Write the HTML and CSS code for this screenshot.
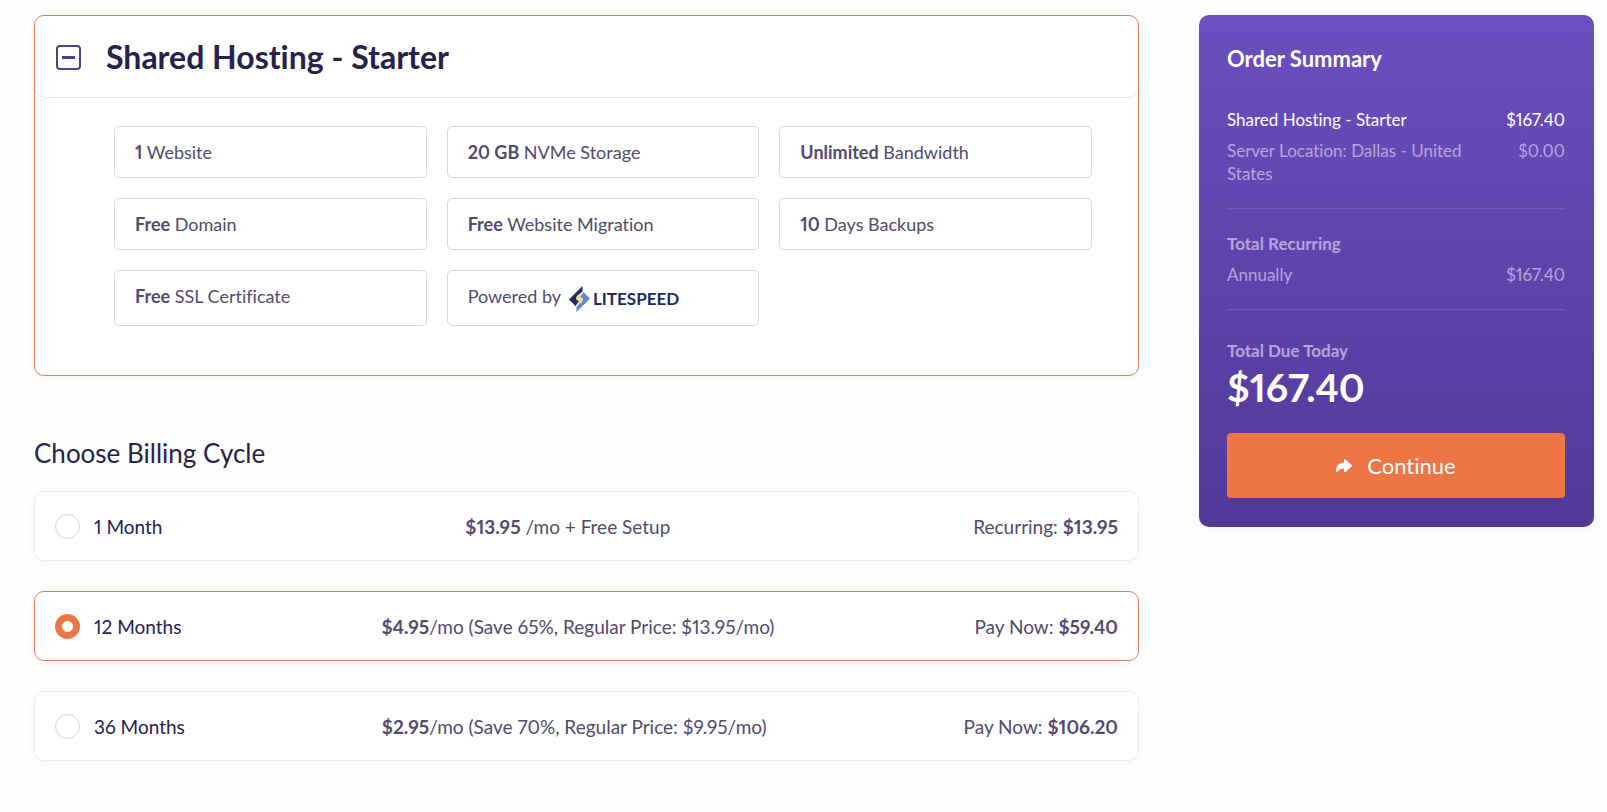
FILE: index.html
```html
<!DOCTYPE html>
<html lang="en">
<head>
    <meta charset="UTF-8">
    <meta name="viewport" content="width=device-width, initial-scale=1.0">
    <title>Shared Hosting - Starter</title>
    <link rel="stylesheet" href="styles.css">
</head>
<body>
    <form class="order" action="#" method="post">
        <main class="order-main">
            <section class="product">
                <header class="product-header">
                    <button type="button" class="toggle" id="toggle" aria-label="Toggle product details" aria-expanded="true" aria-controls="features"></button>
                    <h1>Shared Hosting - Starter</h1>
                </header>
                <ul class="features" id="features">
                    <li><b>1</b> Website</li>
                    <li><b>20 GB</b> NVMe Storage</li>
                    <li><b>Unlimited</b> Bandwidth</li>
                    <li><b>Free</b> Domain</li>
                    <li><b>Free</b> Website Migration</li>
                    <li><b>10</b> Days Backups</li>
                    <li><b>Free</b> SSL Certificate</li>
                    <li class="powered">
                        Powered by
                        <svg class="litespeed" width="120" height="28" viewBox="0 0 120 28" role="img" aria-label="LiteSpeed">
                            <path fill="#1b2a63" d="M13.500 2v5.500L8 12l-.8 3.500L10 17l-3.500 5L0 15.500z"/>
                            <path fill="#5b8bd6" d="M7.500 28v-5.500L13 18l.8-3.500L11 13l3.500-5L21 14.500z"/>
                            <path fill="#f3d778" d="M13.500 7.500 8 12c-1.200 1.500-.8 3 1 4 1.600.9 1 2-1.500 6.500L13 18c1.200-1.500.8-3-1-4-1.600-.9-1-2 1.500-6.500z"/>
                            <text x="24" y="21">LITESPEED</text>
                        </svg>
                    </li>
                </ul>
            </section>

            <h2 class="cycle-title">Choose Billing Cycle</h2>
            <div class="cycles">
                <label class="cycle">
                    <span class="cycle-name"><input type="radio" name="cycle" value="1">1 Month</span>
                    <span><b>$13.95</b> /mo + Free Setup</span>
                    <span>Recurring: <b>$13.95</b></span>
                </label>
                <label class="cycle">
                    <span class="cycle-name"><input type="radio" name="cycle" value="12" checked>12 Months</span>
                    <span><b>$4.95</b>/mo (Save 65%, Regular Price: $13.95/mo)</span>
                    <span>Pay Now: <b>$59.40</b></span>
                </label>
                <label class="cycle">
                    <span class="cycle-name"><input type="radio" name="cycle" value="36">36 Months</span>
                    <span><b>$2.95</b>/mo (Save 70%, Regular Price: $9.95/mo)</span>
                    <span>Pay Now: <b>$106.20</b></span>
                </label>
            </div>
        </main>

        <aside class="summary">
            <h2>Order Summary</h2>
            <div class="summary-block">
                <div class="line line-main"><span>Shared Hosting - Starter</span><span>$167.40</span></div>
                <div class="line"><span>Server Location: Dallas - United States</span><span>$0.00</span></div>
            </div>
            <div class="summary-block">
                <h3>Total Recurring</h3>
                <div class="line"><span>Annually</span><span>$167.40</span></div>
            </div>
            <div class="summary-total">
                <h3>Total Due Today</h3>
                <strong>$167.40</strong>
            </div>
            <button type="submit" class="continue">
                <svg width="16" height="14" viewBox="0 0 16 14" aria-hidden="true">
                    <path fill="currentColor" d="M8 1.200C8 .3 9 0 9.600.5l5.900 5.400c.6.500.6 1.200 0 1.700l-5.900 5.400c-.6.500-1.600.2-1.600-.7V9.800C5 9.800 3 10.300 1.500 12.600c-.4.700-1.400.5-1.400-.3C0 7 3 3.800 8 3.600z"/>
                </svg>
                Continue
            </button>
        </aside>
    </form>

    <script>
        const toggle = document.getElementById("toggle");
        toggle.addEventListener("click", () => {
            const features = document.getElementById("features");
            features.hidden = !features.hidden;
            toggle.setAttribute("aria-expanded", String(!features.hidden));
        });
    </script>
</body>
</html>
```
FILE: styles.css
```css
* {
    box-sizing: border-box;
}
body {
    margin: 0;
    background: #fefefe;
    color: #524a6f;
    font-family: Lato, sans-serif;
    font-size: 18px;
    line-height: 24px;
    font-variant-ligatures: none;
    font-variant-numeric: proportional-nums;
}
h1, h2, h3, ul {
    margin: 0;
    padding: 0;
}
button, input {
    font: inherit;
    margin: 0;
}

.order {
    display: grid;
    grid-template-columns: minmax(0, 1fr) 395px;
    gap: 60px;
    align-items: start;
    padding: 15px 13px 40px 34px;
}

.product {
    background: #fff;
    border: 1px solid #dc8159;
    border-radius: 10px;
    box-shadow: 0 4px 14px rgba(0, 0, 0, 0.04);
}
.product-header {
    display: flex;
    align-items: center;
    gap: 25px;
    padding: 22px 21px 21px;
    border-bottom: 1px solid #e6e6ea;
    border-radius: 10px;
}
.product-header h1 {
    color: #27214d;
    font-size: 32px;
    font-weight: 700;
    line-height: 38px;
}
.toggle {
    display: flex;
    align-items: center;
    justify-content: center;
    width: 25px;
    height: 25px;
    padding: 0;
    background: none;
    border: 2px solid #51418a;
    border-radius: 4px;
    cursor: pointer;
}
.toggle::before {
    content: "";
    width: 13px;
    height: 3px;
    background: #51418a;
}
.features {
    display: grid;
    grid-template-columns: repeat(3, 1fr);
    gap: 20px;
    padding: 28px 46px 49px 79px;
    list-style: none;
}
.features[hidden] {
    display: none;
}
.features li {
    padding: 13px 20px;
    border: 1px solid #d9d9dc;
    border-radius: 5px;
}
.features .powered {
    display: flex;
    gap: 8px;
}
.litespeed text {
    fill: #1b2a63;
    font-size: 17px;
    font-weight: 700;
}

.cycle-title {
    margin: 60px 0 21px;
    color: #27214d;
    font-size: 26px;
    font-weight: 400;
    line-height: 34px;
}
.cycles {
    display: flex;
    flex-direction: column;
    gap: 30px;
}
.cycle {
    display: flex;
    align-items: center;
    justify-content: space-between;
    padding: 22px 20px 21px;
    background: #fff;
    border: 1px solid #ebebed;
    border-radius: 10px;
    box-shadow: 0 4px 14px rgba(0, 0, 0, 0.04);
    font-size: 19px;
    cursor: pointer;
}
.cycle:has(input:checked) {
    border-color: #dc8159;
}
.cycle-name {
    display: flex;
    align-items: center;
    gap: 14px;
    color: #27214d;
}
.cycle input {
    appearance: none;
    width: 25px;
    height: 25px;
    background: #fff;
    border: 1px solid #d5d5d8;
    border-radius: 50%;
}
.cycle input:checked {
    border: 7px solid #ee7644;
}

.summary {
    padding: 28px 29px 29px 28px;
    background: linear-gradient(#6b4fc0, #523998);
    border-radius: 10px;
    box-shadow: 0 4px 14px rgba(0, 0, 0, 0.04);
    color: #b5a5dd;
    font-size: 17px;
    line-height: 23px;
}
.summary h2 {
    margin-bottom: 33px;
    color: #fff;
    font-size: 22px;
    line-height: 32px;
}
.summary h3 {
    font-size: 17px;
    line-height: 22px;
}
.summary-block {
    display: flex;
    flex-direction: column;
    gap: 8px;
    margin-bottom: 24px;
    padding-bottom: 23px;
    border-bottom: 1px solid #7459bd;
}
.line {
    display: flex;
    justify-content: space-between;
    gap: 40px;
}
.line-main {
    color: #fff;
}
.summary-total {
    margin: 30px 0 21px;
}
.summary-total strong {
    display: block;
    color: #fff;
    font-size: 39px;
    line-height: 50px;
}
.continue {
    display: flex;
    align-items: center;
    justify-content: center;
    gap: 15px;
    width: 100%;
    padding: 20px;
    background: #ee7644;
    border: none;
    border-radius: 4px;
    color: #fff;
    font-size: 22px;
    line-height: 25px;
    cursor: pointer;
}
```
